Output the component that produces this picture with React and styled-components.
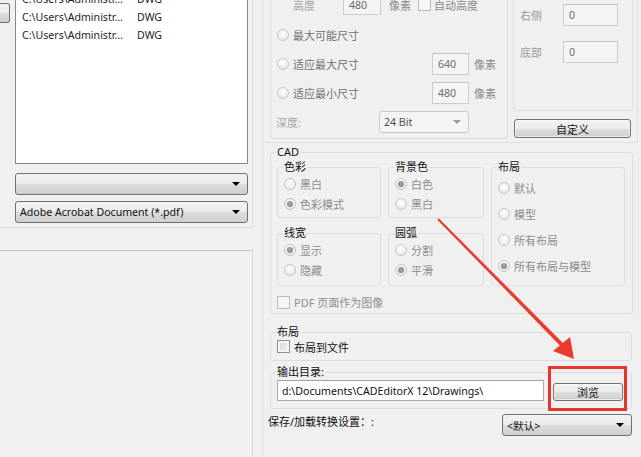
import styled, { createGlobalStyle } from "styled-components";

const FONT = `"Noto Sans", "Noto Sans CJK SC", sans-serif`;

const GlobalStyle = createGlobalStyle`
  html, body {
    margin: 0;
    padding: 0;
    background: #f0f0f0;
    overflow: hidden;
  }
  body {
    font-family: ${FONT};
    font-size: 11px;
    color: #1e1e1e;
  }
  * {
    box-sizing: border-box;
  }
`;

const FILES = [
  "C:\\Users\\Administr...",
  "C:\\Users\\Administr...",
  "C:\\Users\\Administr...",
];

const Page = styled.div`
  position: relative;
  width: 641px;
  height: 457px;
  display: flex;
  overflow: hidden;
  background: #f0f0f0;
`;

/* ---------- left side ---------- */

const LeftPane = styled.div`
  width: 262px;
  display: flex;
  flex-direction: column;
`;

const FilesGroup = styled.div`
  width: 253px;
  height: 228px;
  display: flex;
  align-items: flex-start;
  border-right: 1px solid #dcdfe3;
  border-bottom: 1px solid #dcdfe3;
  border-bottom-right-radius: 3px;
`;

const EdgeButton = styled.div`
  width: 10px;
  height: 20px;
  margin-top: 3px;
  border: 1px solid #707070;
  border-left: none;
  border-radius: 0 3px 3px 0;
  background: linear-gradient(#f2f2f2 0%, #ebebeb 50%, #dddddd 50%, #cfcfcf 100%);
`;

const FilesColumn = styled.div`
  width: 233px;
  margin-left: 5px;
  display: flex;
  flex-direction: column;
`;

const FileList = styled.div`
  height: 185px;
  margin-top: -21px;
  padding-top: 10px;
  background: #fff;
  border: 1px solid #828790;
`;

const FileRow = styled.div`
  display: grid;
  grid-template-columns: 115px 1fr;
  height: 18px;
  align-items: center;
  padding-left: 6px;
  font-size: 10.6px;
  color: #1e1e1e;
  white-space: nowrap;
`;

const Combo = styled.div`
  position: relative;
  width: ${(p) => p.$w || "100%"};
  height: 22px;
  margin-top: ${(p) => p.$mt || 0}px;
  padding: 0 18px 0 4px;
  display: flex;
  align-items: center;
  font-size: 10.6px;
  border: 1px solid ${(p) => (p.$disabled ? "#c5c8cc" : "#707070")};
  border-radius: 3px;
  background: ${(p) =>
    p.$disabled
      ? "#f4f4f4"
      : "linear-gradient(#f2f2f2 0%, #ebebeb 50%, #dddddd 50%, #cfcfcf 100%)"};
  color: ${(p) => (p.$disabled ? "#505050" : "#111")};
  white-space: nowrap;

  &::after {
    content: "";
    position: absolute;
    right: 7px;
    top: 8px;
    border-left: 4px solid transparent;
    border-right: 4px solid transparent;
    border-top: 4px solid ${(p) => (p.$disabled ? "#9a9a9a" : "#000")};
  }
`;

const LowerPanel = styled.div`
  width: 253px;
  flex: 1;
  margin-top: 22px;
  border-top: 1px solid #c4c4c4;
  border-right: 1px solid #d6d6d6;
`;

/* ---------- right side ---------- */

const RightPane = styled.div`
  flex: 1;
  display: flex;
  flex-direction: column;
  border-left: 1px solid #dadde1;
`;

const TopSection = styled.div`
  width: 375px;
  height: 143px;
  display: flex;
  align-items: flex-start;
  gap: 5px;
  padding-left: 7px;
  border-right: 1px solid #dcdfe3;
  border-bottom: 1px solid #dcdfe3;
  border-bottom-right-radius: 3px;
`;

const Group = styled.div`
  position: relative;
  width: ${(p) => p.$w}px;
  height: ${(p) => p.$h}px;
  margin-top: ${(p) => p.$mt || 0}px;
  margin-left: ${(p) => p.$ml || 0}px;
  border: 1px solid #d5dfe5;
  border-radius: 3px;
  display: flex;
  flex-direction: column;
  align-items: flex-start;
  padding: ${(p) => p.$pad || "0"};
`;

const Legend = styled.span`
  position: absolute;
  top: -9px;
  left: 5px;
  padding: 0 1px;
  line-height: 16px;
  background: #f0f0f0;
  color: #111;
  white-space: nowrap;
`;

const Row = styled.div`
  display: flex;
  align-items: center;
  height: ${(p) => p.$h || 29}px;
  margin-left: ${(p) => p.$ml || 0}px;
  margin-top: ${(p) => p.$mt || 0}px;
  white-space: nowrap;
`;

const Text = styled.span`
  color: ${(p) => p.$c || "#111"};
  width: ${(p) => (p.$w ? `${p.$w}px` : "auto")};
  margin-left: ${(p) => p.$ml || 0}px;
  flex: none;
`;

const Field = styled.div`
  width: ${(p) => p.$w}px;
  height: ${(p) => p.$h || 22}px;
  margin-left: ${(p) => p.$ml || 0}px;
  margin-top: ${(p) => p.$mt || 0}px;
  flex: none;
  display: flex;
  align-items: center;
  padding-left: ${(p) => (p.$disabled ? 5 : 4)}px;
  font-size: 10.6px;
  background: ${(p) => (p.$disabled ? "#f4f4f4" : "#fff")};
  border: 1px solid ${(p) => (p.$disabled ? "#c9ccd0" : "#abadb3")};
  border-top-color: ${(p) => (p.$disabled ? "#bfc2c6" : "#9ea2a8")};
  color: ${(p) => (p.$disabled ? "#6d6d6d" : "#111")};
  white-space: nowrap;
`;

const Button = styled.div`
  width: ${(p) => p.$w}px;
  height: ${(p) => p.$h || 19}px;
  margin-top: ${(p) => p.$mt || 0}px;
  margin-left: ${(p) => p.$ml || 0}px;
  display: grid;
  place-items: center;
  border: 1px solid #707070;
  border-radius: 3px;
  background: linear-gradient(#f2f2f2 0%, #ebebeb 50%, #dddddd 50%, #cfcfcf 100%);
  color: #111;
  box-shadow: inset 0 0 0 1px rgba(255, 255, 255, 0.6);
`;

const Option = styled.div`
  display: flex;
  align-items: center;
  gap: 4px;
  height: ${(p) => p.$h || 20}px;
  width: ${(p) => (p.$w ? `${p.$w}px` : "auto")};
  flex: none;
  color: ${(p) => p.$c || "#8d8d8d"};
  white-space: nowrap;
`;

const Radio = styled.span`
  width: 12px;
  height: 12px;
  flex: none;
  border-radius: 50%;
  border: 1px solid #c3c6ca;
  background: radial-gradient(circle at 50% 35%, #ffffff 0%, #ececec 65%, #dedede 100%);
  display: grid;
  place-items: center;

  &::after {
    content: "";
    width: 6px;
    height: 6px;
    border-radius: 50%;
    background: ${(p) =>
      p.$checked ? "radial-gradient(circle at 50% 40%, #a8a8a8, #7e7e7e)" : "transparent"};
  }
`;

const Check = styled.span`
  width: 13px;
  height: 13px;
  flex: none;
  margin-left: ${(p) => p.$ml || 0}px;
  border: 1px solid ${(p) => (p.$strong ? "#8e8f8f" : "#b9bcbf")};
  background: ${(p) =>
    p.$strong ? "linear-gradient(135deg, #d4d4d4, #f3f3f3)" : "#f6f6f6"};
  box-shadow: inset 0 0 0 2px ${(p) => (p.$strong ? "#f4f4f4" : "#f6f6f6")};
`;

const CadGrid = styled.div`
  display: grid;
  grid-template-columns: 104px 96px 134px;
  grid-template-rows: 51px 53px;
  column-gap: 7px;
  row-gap: 15px;
`;

const SubGroup = styled.div`
  position: relative;
  border: 1px solid #d5dfe5;
  border-radius: 3px;
  display: flex;
  flex-direction: column;
  padding: ${(p) => p.$pt || 6}px 0 0 6px;
  grid-row: ${(p) => p.$span || "auto"};
`;

const BrowseWrap = styled.div`
  position: relative;
  margin-left: 9px;
  margin-top: 2px;
`;

const Highlight = styled.div`
  position: absolute;
  left: -5px;
  right: -4px;
  top: -17px;
  bottom: -10px;
  border: 3px solid #e8352c;
  pointer-events: none;
`;

const SaveRow = styled.div`
  display: flex;
  justify-content: space-between;
  align-items: flex-start;
  margin-top: 5px;
  padding: 0 9px 0 5px;
`;

const ArrowLayer = styled.svg`
  position: absolute;
  left: 0;
  top: 0;
  pointer-events: none;
`;

function RadioOption({ label, checked, h, w, c }) {
  return (
    <Option $h={h} $w={w} $c={c}>
      <Radio $checked={checked} />
      <span>{label}</span>
    </Option>
  );
}

export default function App() {
  return (
    <Page>
      <GlobalStyle />

      <LeftPane>
        <FilesGroup>
          <EdgeButton />
          <FilesColumn>
            <FileList>
              {FILES.map((f, i) => (
                <FileRow key={i}>
                  <span>{f}</span>
                  <span>DWG</span>
                </FileRow>
              ))}
            </FileList>
            <Combo $mt={9} />
            <Combo $mt={6}>Adobe Acrobat Document (*.pdf)</Combo>
          </FilesColumn>
        </FilesGroup>
        <LowerPanel />
      </LeftPane>

      <RightPane>
        <TopSection>
          <Group $w={238} $h={170} $mt={-31} $pad="19px 0 0 6px">
            <Row $h={31}>
              <Text $c="#a3a3a3" $w={50} $ml={16}>高度</Text>
              <Field $disabled $w={38} $h={21}>480</Field>
              <Text $c="#8a8a8a" $ml={8}>像素</Text>
              <Check $ml={7} />
              <Text $c="#8a8a8a" $ml={3}>自动高度</Text>
            </Row>
            <Row>
              <RadioOption label="最大可能尺寸" c="#707070" />
            </Row>
            <Row>
              <RadioOption label="适应最大尺寸" c="#707070" w={155} />
              <Field $disabled $w={37}>640</Field>
              <Text $c="#8a8a8a" $ml={5}>像素</Text>
            </Row>
            <Row>
              <RadioOption label="适应最小尺寸" c="#707070" w={155} />
              <Field $disabled $w={37}>480</Field>
              <Text $c="#8a8a8a" $ml={5}>像素</Text>
            </Row>
            <Row>
              <Text $c="#a3a3a3" $w={103} $ml={-1}>深度:</Text>
              <Combo $disabled $w="90px">24 Bit</Combo>
            </Row>
          </Group>

          <div>
            <Group $w={120} $h={142} $mt={-31} $pad="34px 0 0 6px">
              <Row $h={22}>
                <Text $c="#9a9a9a" $w={43}>右侧</Text>
                <Field $disabled $w={55}>0</Field>
              </Row>
              <Row $h={22} $mt={15}>
                <Text $c="#9a9a9a" $w={43}>底部</Text>
                <Field $disabled $w={55}>0</Field>
              </Row>
            </Group>
            <Button $w={117} $mt={8} $ml={1}>自定义</Button>
          </div>
        </TopSection>

        <Group $w={363} $h={162} $mt={9} $ml={7} $pad="14px 0 0 6px">
          <Legend>CAD</Legend>
          <CadGrid>
            <SubGroup>
              <Legend>色彩</Legend>
              <RadioOption label="黑白" />
              <RadioOption label="色彩模式" checked />
            </SubGroup>
            <SubGroup>
              <Legend>背景色</Legend>
              <RadioOption label="白色" checked />
              <RadioOption label="黑白" />
            </SubGroup>
            <SubGroup $span="span 2" $pt={7}>
              <Legend>布局</Legend>
              <RadioOption label="默认" h={26} />
              <RadioOption label="模型" h={26} />
              <RadioOption label="所有布局" h={26} />
              <RadioOption label="所有布局与模型" h={26} checked />
            </SubGroup>
            <SubGroup>
              <Legend>线宽</Legend>
              <RadioOption label="显示" checked />
              <RadioOption label="隐藏" />
            </SubGroup>
            <SubGroup>
              <Legend>圆弧</Legend>
              <RadioOption label="分割" />
              <RadioOption label="平滑" checked />
            </SubGroup>
          </CadGrid>
          <Row $h={14} $mt={9}>
            <Check />
            <Text $c="#8d8d8d" $ml={4}>PDF 页面作为图像</Text>
          </Row>
        </Group>

        <Group $w={362} $h={29} $mt={18} $ml={7} $pad="0 0 0 6px">
          <Legend>布局</Legend>
          <Row $h={27}>
            <Check $strong />
            <Text $ml={4}>布局到文件</Text>
          </Row>
        </Group>

        <Group $w={362} $h={37} $mt={11} $ml={7} $pad="7px 0 0 6px">
          <Legend>输出目录:</Legend>
          <Row $h={21}>
            <Field $w={267} $h={21}>d:\Documents\CADEditorX 12\Drawings\</Field>
            <BrowseWrap>
              <Button $w={70} $h={18}>浏览</Button>
              <Highlight />
            </BrowseWrap>
          </Row>
        </Group>

        <SaveRow>
          <Text style={{ lineHeight: "16px" }}>保存/加载转换设置：:</Text>
          <Combo $w="130px">&lt;默认&gt;</Combo>
        </SaveRow>
      </RightPane>

      <ArrowLayer width="641" height="457" viewBox="0 0 641 457">
        <polygon
          points="437.3,219.7 438.7,218.3 563.4,343.4 560.6,346.2"
          fill="#ea3a2e"
        />
        <polygon points="574,359 553,351 570,337" fill="#ea3a2e" />
      </ArrowLayer>
    </Page>
  );
}
